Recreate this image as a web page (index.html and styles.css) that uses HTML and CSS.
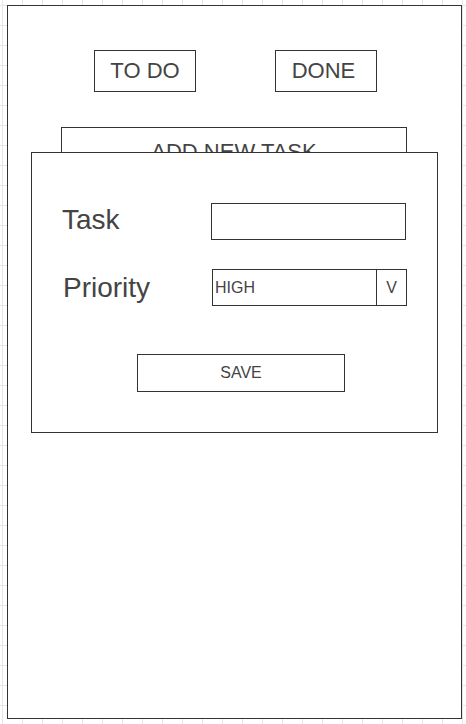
FILE: index.html
```html
<!DOCTYPE html>
<html lang="en">
<head>
<meta charset="utf-8">
<title>To Do</title>
<link rel="stylesheet" href="styles.css">
</head>
<body>
<div class="frame">
  <div class="tabs">
    <div class="tab">TO DO</div>
    <div class="tab tab-done">DONE</div>
  </div>
  <div class="add-task">ADD NEW TASK</div>
  <div class="modal">
    <div class="form-row">
      <div class="label label-task">Task</div>
      <div class="input"></div>
    </div>
    <div class="form-row form-row-priority">
      <div class="label label-priority">Priority</div>
      <div class="select">
        <div class="select-value">HIGH</div>
        <div class="select-arrow">V</div>
      </div>
    </div>
    <div class="save">SAVE</div>
  </div>
</div>
</body>
</html>
```

FILE: styles.css
```css
html, body {
  margin: 0;
  padding: 0;
}

body {
  width: 466px;
  height: 724px;
  overflow: hidden;
  background-color: #ffffff;
  background-image:
    linear-gradient(to right, #e6e6e6 1px, transparent 1px),
    linear-gradient(to bottom, #e6e6e6 1px, transparent 1px);
  background-size: 20px 20px;
  background-position: 2px 5px;
  font-family: "Liberation Sans", Arial, sans-serif;
  color: #444444;
  padding-top: 5px;
  box-sizing: border-box;
}

.frame {
  position: relative;
  margin-left: 7px;
  width: 455px;
  height: 714px;
  box-sizing: border-box;
  border: 1px solid #333333;
  background: #ffffff;
}

.tabs {
  display: flex;
  padding: 44px 0 0 86px;
  gap: 79px;
}

.tab {
  width: 102px;
  height: 42px;
  box-sizing: border-box;
  border: 1px solid #333333;
  display: flex;
  align-items: center;
  justify-content: center;
  font-size: 22px;
}

.tab-done {
  padding-right: 5px;
}

.add-task {
  margin: 35px 0 0 53px;
  width: 346px;
  height: 50px;
  box-sizing: border-box;
  border: 1px solid #333333;
  display: flex;
  align-items: center;
  justify-content: center;
  font-size: 22px;
}

.modal {
  position: absolute;
  left: 23px;
  top: 146px;
  width: 407px;
  height: 281px;
  box-sizing: border-box;
  border: 1px solid #333333;
  background: #ffffff;
  padding: 50px 0 0 30px;
}

.form-row {
  display: flex;
  align-items: center;
  height: 37px;
}

.form-row-priority {
  margin-top: 29px;
}

.label {
  width: 149px;
  line-height: 1;
  font-size: 28px;
}

.label-task {
  margin-top: -3px;
}

.label-priority {
  margin-left: 1px;
  margin-right: -1px;
}

.input {
  width: 195px;
  height: 37px;
  box-sizing: border-box;
  border: 1px solid #333333;
}

.select {
  margin-left: 1px;
  width: 195px;
  height: 37px;
  box-sizing: border-box;
  border: 1px solid #333333;
  display: flex;
  font-size: 16px;
}

.select-value {
  flex: 1;
  display: flex;
  align-items: center;
  padding-left: 2px;
}

.select-arrow {
  width: 30px;
  box-sizing: border-box;
  border-left: 1px solid #333333;
  display: flex;
  align-items: center;
  justify-content: center;
}

.save {
  margin: 48px 0 0 75px;
  width: 208px;
  height: 38px;
  box-sizing: border-box;
  border: 1px solid #333333;
  display: flex;
  align-items: center;
  justify-content: center;
  font-size: 16px;
}
```
